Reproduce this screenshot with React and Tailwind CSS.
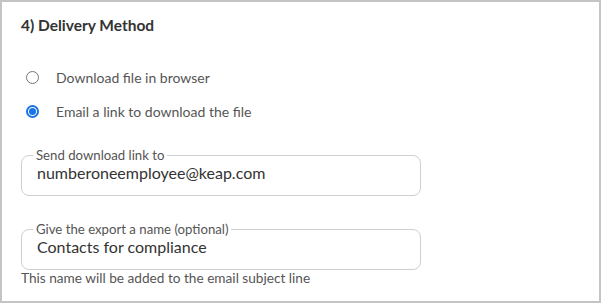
import React, { useState } from "react";

const font = { fontFamily: "Lato, 'Open Sans', sans-serif" };

const Radio = ({ checked, label, onClick }) => (
  <label className="flex h-[20px] cursor-pointer items-center" onClick={onClick}>
    <span className="ml-[24px] flex h-[13px] w-[13px] items-center justify-center">
      {checked ? (
        <span className="flex h-[13px] w-[13px] items-center justify-center rounded-full border-2 border-[#1a73e8]">
          <span className="h-[7px] w-[7px] rounded-full bg-[#1a73e8]" />
        </span>
      ) : (
        <span className="h-[13px] w-[13px] rounded-full border border-[#767676]" />
      )}
    </span>
    <span className="ml-[17px] text-[14px] text-[#555]">{label}</span>
  </label>
);

const OutlinedField = ({ label, value }) => (
  <fieldset className="h-[48px] w-[400px] rounded-[8px] border border-[#cfcfcf] px-[11px] pb-0">
    <legend className="px-[3px] text-[13.2px] leading-[14px] text-[#555]">{label}</legend>
    <div className="mt-[1px] pl-[4px] text-[16px] leading-[20px] text-[#333]">{value}</div>
  </fieldset>
);

export default function App() {
  const [method, setMethod] = useState("email");

  return (
    <div className="h-[303px] w-[601px] border-2 border-[#c4c4c4] bg-white" style={font}>
      <div className="pl-[19px] pt-[13px]">
        <h2 className="text-[15.5px] font-bold leading-[20px] text-[#333]">4) Delivery Method</h2>
      </div>

      <div className="mt-[32px] flex flex-col gap-[14px]">
        <Radio
          checked={method === "browser"}
          label="Download file in browser"
          onClick={() => setMethod("browser")}
        />
        <Radio
          checked={method === "email"}
          label="Email a link to download the file"
          onClick={() => setMethod("email")}
        />
      </div>

      <div className="mt-[27px] pl-[19px]">
        <OutlinedField label="Send download link to" value="numberoneemployee@keap.com" />
      </div>

      <div className="mt-[26px] pl-[19px]">
        <OutlinedField label="Give the export a name (optional)" value="Contacts for compliance" />
        <p className="mt-0 text-[13.65px] leading-[17px] text-[#555]">
          This name will be added to the email subject line
        </p>
      </div>
    </div>
  );
}
